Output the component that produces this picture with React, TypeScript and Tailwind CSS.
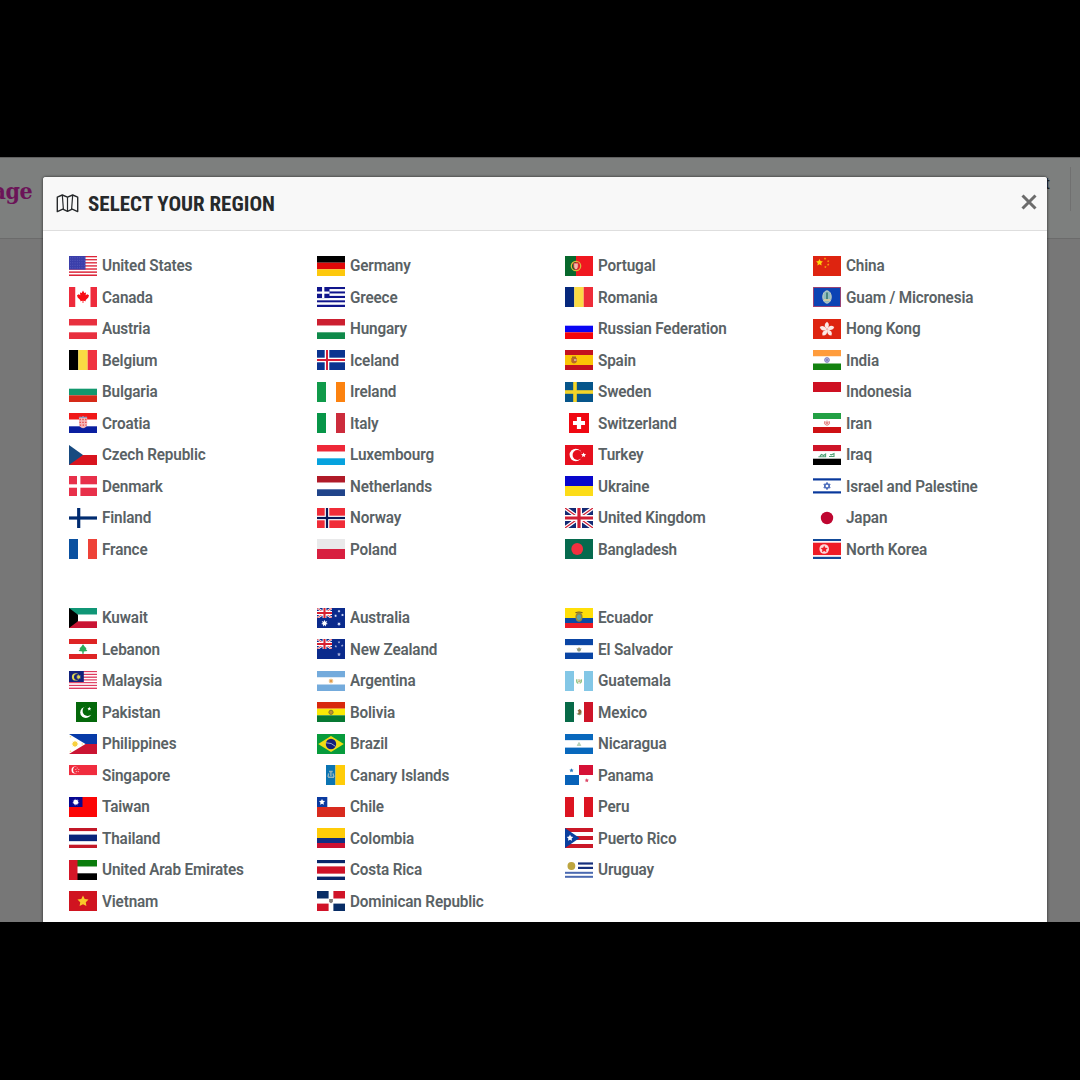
import React from "react";

type Bar = [string, number];

/* Horizontal stripes: each bar is [colour, height], top to bottom, 20 in all. */
function H({ bars }: { bars: Bar[] }) {
  let y = 0;
  return (
    <>
      {bars.map(([c, h], i) => {
        const r = <rect key={i} x="0" y={y} width="28" height={h} fill={c} />;
        y += h;
        return r;
      })}
    </>
  );
}

/* Vertical stripes: each bar is [colour, width], left to right, 28 in all. */
function V({ bars }: { bars: Bar[] }) {
  let x = 0;
  return (
    <>
      {bars.map(([c, w], i) => {
        const r = <rect key={i} x={x} y="0" width={w} height="20" fill={c} />;
        x += w;
        return r;
      })}
    </>
  );
}

function R({ x, y, w, h, c }: { x: number; y: number; w: number; h: number; c: string }) {
  return <rect x={x} y={y} width={w} height={h} fill={c} />;
}

function Star({ x, y, r, c, n = 5 }: { x: number; y: number; r: number; c: string; n?: number }) {
  const pts: string[] = [];
  for (let i = 0; i < n * 2; i++) {
    const q = i % 2 ? r * 0.5 : r;
    const a = (Math.PI * i) / n - Math.PI / 2;
    pts.push(`${x + q * Math.cos(a)},${y + q * Math.sin(a)}`);
  }
  return <polygon points={pts.join(" ")} fill={c} />;
}

function Nordic({ bg, outer, inner, ow, iw, cx = 10 }: { bg: string; outer: string; inner?: string; ow: number; iw?: number; cx?: number }) {
  return (
    <>
      <R x={0} y={0} w={28} h={20} c={bg} />
      <R x={cx - ow / 2} y={0} w={ow} h={20} c={outer} />
      <R x={0} y={10 - ow / 2} w={28} h={ow} c={outer} />
      {inner && iw ? (
        <>
          <R x={cx - iw / 2} y={0} w={iw} h={20} c={inner} />
          <R x={0} y={10 - iw / 2} w={28} h={iw} c={inner} />
        </>
      ) : null}
    </>
  );
}

function Canton() {
  return (
    <>
      <R x={0} y={0} w={28} h={20} c="#0a2a8c" />
      <path d="M0 0L15 10M15 0L0 10" stroke="#fff" strokeWidth="2.2" />
      <path d="M0 0L15 10M15 0L0 10" stroke="#d8202f" strokeWidth="0.8" />
      <path d="M7.5 0V10M0 5H15" stroke="#fff" strokeWidth="3.8" />
      <path d="M7.5 0V10M0 5H15" stroke="#d8202f" strokeWidth="2.1" />
      <R x={15} y={0} w={13} h={20} c="#0a2a8c" />
      <R x={0} y={10} w={28} h={10} c="#0a2a8c" />
    </>
  );
}

const W = "#ffffff";

const FLAGS: Record<string, React.ReactNode> = {
  "United States": (
    <>
      <H bars={Array.from({ length: 13 }, (_, i): Bar => [i % 2 ? W : "#dc2438", 20 / 13])} />
      <R x={0} y={0} w={16.5} h={13.6} c="#3a3eaa" />
      {[1.8, 4.3, 6.8, 9.3, 11.8].map((y) => (
        <path key={y} d={`M1 ${y}H16`} stroke="#6467c2" strokeWidth="0.8" strokeDasharray="0.9 1.4" />
      ))}
    </>
  ),
  Canada: (
    <>
      <V bars={[["#ee2b3c", 6.5], [W, 15], ["#ee2b3c", 6.5]]} />
      <path d="M14 3.6L15.3 6L17 5.5L16.7 8.2L18.2 7.2L20 8.3L19.3 10.6L16.5 13.2L17 14.2L14.4 13.8V16H13.6V13.8L11 14.2L11.5 13.2L8.7 10.6L8 8.3L9.8 7.2L11.3 8.2L11 5.5L12.7 6Z" fill="#f80d14" />
    </>
  ),
  Austria: <H bars={[["#e8303f", 6.7], [W, 6.6], ["#e8303f", 6.7]]} />,
  Belgium: <V bars={[["#000", 9.3], ["#fadc43", 9.4], ["#f03340", 9.3]]} />,
  Bulgaria: <H bars={[[W, 6.7], ["#12986e", 6.6], ["#d52a18", 6.7]]} />,
  Croatia: (
    <>
      <H bars={[["#f01818", 6.7], [W, 6.6], ["#0a1fa0", 6.7]]} />
      <path d="M10 5H18.2V11Q18 14.5 14.1 15.2Q10.2 14.5 10 11Z" fill="#f6b8b8" />
      <path d="M10.5 6.5H18M10.5 9.3H18M10.8 12.1H17.6" stroke="#e84848" strokeWidth="1.3" strokeDasharray="1.4 1.4" />
      <path d="M9.6 5L10.8 3.4L12.5 4L14 3L15.6 4L17.3 3.4L18.5 5Z" fill="#8e9fc4" />
    </>
  ),
  "Czech Republic": (
    <>
      <H bars={[[W, 10], ["#d8141e", 10]]} />
      <path d="M0 0L14 10L0 20Z" fill="#174a80" />
    </>
  ),
  Denmark: <Nordic bg="#e8304a" outer={W} ow={3.4} cx={9.7} />,
  Finland: <Nordic bg={W} outer="#002b70" ow={3.2} cx={9.7} />,
  France: <V bars={[["#0a50a0", 9], [W, 10], ["#ee4238", 9]]} />,

  Germany: <H bars={[["#000", 6.7], ["#e00808", 6.6], ["#fdc80c", 6.7]]} />,
  Greece: (
    <>
      <H bars={Array.from({ length: 9 }, (_, i): Bar => [i % 2 ? W : "#10158c", 20 / 9])} />
      <R x={0} y={0} w={12.5} h={11.1} c="#10158c" />
      <path d="M6.2 0V11.1M0 5.6H12.5" stroke="#fff" strokeWidth="2.3" />
    </>
  ),
  Hungary: <H bars={[["#cc1f30", 6.7], [W, 6.6], ["#0f8a4a", 6.7]]} />,
  Iceland: <Nordic bg="#0a3490" outer={W} inner="#d81e38" ow={4.6} iw={2} />,
  Ireland: <V bars={[["#109a4a", 9], [W, 10], ["#fc820f", 9]]} />,
  Italy: <V bars={[["#079548", 9], [W, 10], ["#cc2c3c", 9]]} />,
  Luxembourg: <H bars={[["#ee2838", 6.7], [W, 6.6], ["#06a2de", 6.7]]} />,
  Netherlands: <H bars={[["#b01a28", 6.7], [W, 6.6], ["#20448a", 6.7]]} />,
  Norway: <Nordic bg="#f02c38" outer={W} inner="#0a1858" ow={4.6} iw={2.2} />,
  Poland: <H bars={[["#e9e9ea", 10], ["#d81f40", 10]]} />,

  Portugal: (
    <>
      <V bars={[["#07682c", 11], ["#f01820", 17]]} />
      <circle cx="11" cy="10" r="4.7" fill="none" stroke="#d8b73c" strokeWidth="1.3" />
      <path d="M8.7 7H13.3V11Q12.8 13.4 11 13.8Q9.2 13.4 8.7 11Z" fill="#f0b9a8" stroke="#d4202a" strokeWidth="0.8" />
    </>
  ),
  Romania: <V bars={[["#06287c", 9.3], ["#fbdb45", 9.4], ["#ee2c38", 9.3]]} />,
  "Russian Federation": <H bars={[[W, 6.7], ["#0a06f4", 6.6], ["#f4060c", 6.7]]} />,
  Spain: (
    <>
      <H bars={[["#c4121e", 5], ["#fbc505", 10], ["#c4121e", 5]]} />
      <path d="M6.3 8H11.8V11.8Q11 13.5 9 13.6Q7 13.5 6.3 11.8Z" fill="#b8672a" />
      <path d="M7 7.2H11" stroke="#8f5c28" strokeWidth="1.3" />
      <R x={9} y={9} w={2.4} h={2} c="#d8a58c" />
    </>
  ),
  Sweden: <Nordic bg="#06558a" outer="#f4d428" ow={3.6} cx={10} />,
  Switzerland: (
    <>
      <R x={4} y={0} w={20} h={20} c="#f00812" />
      <path d="M14 4V16M8 10H20" stroke="#fff" strokeWidth="4.2" />
    </>
  ),
  Turkey: (
    <>
      <R x={0} y={0} w={28} h={20} c="#e6101e" />
      <circle cx="10.8" cy="10" r="6.2" fill="#fff" />
      <circle cx="12.5" cy="10" r="4.9" fill="#e6101e" />
      <Star x={18.6} y={10} r={2.6} c="#fff" />
    </>
  ),
  Ukraine: <H bars={[["#0806cc", 10], ["#fcdc18", 10]]} />,
  "United Kingdom": (
    <>
      <R x={0} y={0} w={28} h={20} c="#142a74" />
      <path d="M0 0L28 20M28 0L0 20" stroke="#fff" strokeWidth="3.8" />
      <path d="M0 0L28 20M28 0L0 20" stroke="#d01e34" strokeWidth="1.2" />
      <path d="M14 0V20M0 10H28" stroke="#fff" strokeWidth="6" />
      <path d="M14 0V20M0 10H28" stroke="#d01e34" strokeWidth="3.2" />
    </>
  ),
  Bangladesh: (
    <>
      <R x={0} y={0} w={28} h={20} c="#066a4e" />
      <circle cx="12.2" cy="10" r="5.9" fill="#f2303f" />
    </>
  ),

  China: (
    <>
      <R x={0} y={0} w={28} h={20} c="#de2410" />
      <Star x={6.5} y={6.5} r={3.6} c="#fcd80c" />
      <Star x={12} y={2.6} r={1.3} c="#f8a010" />
      <Star x={15.2} y={5.2} r={1.3} c="#f8a010" />
      <Star x={15.2} y={8.6} r={1.3} c="#f8a010" />
      <Star x={12.4} y={11} r={1.3} c="#f8a010" />
    </>
  ),
  "Guam / Micronesia": (
    <>
      <R x={0} y={0} w={28} h={20} c="#b84468" />
      <R x={0.8} y={0.8} w={26.4} h={18.4} c="#0b43b4" />
      <ellipse cx="14" cy="10" rx="4.2" ry="6.2" fill="#8fbcc0" stroke="#c7cfc4" strokeWidth="1" />
      <path d="M14 5.5V12.5" stroke="#2c6f62" strokeWidth="1.4" />
      <path d="M11 13H17" stroke="#dfd0a0" strokeWidth="1.6" />
    </>
  ),
  "Hong Kong": (
    <>
      <R x={0} y={0} w={28} h={20} c="#de2410" />
      {[0, 72, 144, 216, 288].map((a) => (
        <path key={a} d="M14 10.4Q9.4 6 14 2.8Q17.8 5.6 14 10.4Z" fill="#fbe9e5" transform={`rotate(${a} 14 10.4)`} />
      ))}
    </>
  ),
  India: (
    <>
      <H bars={[["#ff9c3c", 6.5], [W, 7], ["#138210", 6.5]]} />
      <circle cx="14" cy="10" r="2.4" fill="#b3b3df" stroke="#6f70b8" strokeWidth="0.8" />
      <circle cx="14" cy="10" r="0.8" fill="#5555a6" />
    </>
  ),
  Indonesia: <H bars={[["#ce1022", 10], [W, 10]]} />,
  Iran: (
    <>
      <H bars={[["#22a044", 6], [W, 8], ["#ce1014", 6]]} />
      <path d="M12 8Q10.4 10.8 13 12.3M16 8Q17.6 10.8 15 12.3M14 7.6V12.8M13.1 9V11M14.9 9V11" stroke="#dc6666" strokeWidth="0.9" fill="none" />
    </>
  ),
  Iraq: (
    <>
      <H bars={[["#ce1428", 6.3], [W, 7.4], ["#000", 6.3]]} />
      <path d="M5.4 11.8H12.6V9L10.6 10.5L8.5 9.5L7 11M16 11.5H21V8.6L18.5 9.8L17 9.5" stroke="#4f9f74" strokeWidth="1.1" fill="none" />
    </>
  ),
  "Israel and Palestine": (
    <>
      <H bars={[[W, 2.3], ["#08389c", 2.4], [W, 10.6], ["#08389c", 2.4], [W, 2.3]]} />
      <path d="M14 6.4L17.1 11.8H10.9ZM14 13.6L10.9 8.2H17.1Z" stroke="#3459b2" strokeWidth="0.95" fill="none" />
    </>
  ),
  Japan: (
    <>
      <R x={0} y={0} w={28} h={20} c={W} />
      <circle cx="14" cy="10" r="6.2" fill="#be0630" />
    </>
  ),
  "North Korea": (
    <>
      <H bars={[["#124a98", 2.2], [W, 1.5], ["#ee1c26", 12.6], [W, 1.5], ["#124a98", 2.2]]} />
      <circle cx="11.2" cy="10" r="4.8" fill="#fbdadb" />
      <Star x={11.2} y={10.2} r={3.8} c="#ee1c26" />
    </>
  ),

  Kuwait: (
    <>
      <H bars={[["#109676", 6.7], [W, 6.6], ["#ca1434", 6.7]]} />
      <path d="M0 0L9 6.7V13.3L0 20Z" fill="#000" />
    </>
  ),
  Lebanon: (
    <>
      <H bars={[["#de2424", 5], [W, 10], ["#de2424", 5]]} />
      <path d="M14 5.3L16 8L17.5 9.3L16.8 10L18.4 12L14.7 12.5V14.7H13.3V12.5L9.6 12L11.2 10L10.5 9.3L12 8Z" fill="#2bac5a" />
    </>
  ),
  Malaysia: (
    <>
      <g transform="scale(1 0.9)">
        <H bars={Array.from({ length: 13 }, (_, i): Bar => [i % 2 ? W : "#de3a5e", 20 / 13])} />
      </g>
      <R x={0} y={0} w={14.8} h={11} c="#12227c" />
      <circle cx="6.6" cy="5.9" r="3.7" fill="#ddd452" />
      <circle cx="8" cy="5.9" r="3" fill="#12227c" />
      <Star x={9.6} y={5.9} r={2.7} c="#ddd452" n={8} />
    </>
  ),
  Pakistan: (
    <>
      <R x={0} y={0} w={7} h={20} c={W} />
      <R x={7} y={0} w={21} h={20} c="#04680a" />
      <circle cx="16.8" cy="10.4" r="5.6" fill="#fff" />
      <circle cx="18.6" cy="8.9" r="5" fill="#04680a" />
      <Star x={20.3} y={6.8} r={2} c="#fff" />
    </>
  ),
  Philippines: (
    <>
      <H bars={[["#073ba8", 10], ["#ca1432", 10]]} />
      <path d="M0 0L16.5 10L0 20Z" fill="#fff" />
      <Star x={6} y={10} r={3.6} c="#f8d040" n={8} />
      <circle cx="6" cy="10" r="2.4" fill="#f8d040" />
      <circle cx="1.5" cy="2.8" r="0.8" fill="#f8dc78" />
      <circle cx="1.5" cy="17.2" r="0.8" fill="#f8dc78" />
      <circle cx="13.2" cy="10" r="0.7" fill="#f8dc78" />
    </>
  ),
  Singapore: (
    <>
      <H bars={[["#f02c3e", 10.3], [W, 9.7]]} />
      <circle cx="6.1" cy="5" r="3.6" fill="#fff" />
      <circle cx="7.5" cy="5" r="3.4" fill="#f02c3e" />
      {[[8.2, 3], [6.8, 4.5], [9.8, 4.5], [7.3, 6.6], [9.2, 6.6]].map(([x, y]) => (
        <circle key={`${x}-${y}`} cx={x} cy={y} r="0.6" fill="#fac5c9" />
      ))}
    </>
  ),
  Taiwan: (
    <>
      <R x={0} y={0} w={28} h={20} c="#fc0606" />
      <R x={0} y={0} w={13.5} h={10} c="#080890" />
      <Star x={6.8} y={5.2} r={4} c="#7e7ed4" n={12} />
      <circle cx="6.8" cy="5.2" r="2.4" fill="#fff" />
    </>
  ),
  Thailand: <H bars={[["#c21828", 3.3], [W, 3.3], ["#08247a", 6.8], [W, 3.3], ["#c21828", 3.3]]} />,
  "United Arab Emirates": (
    <>
      <H bars={[["#0a7c0c", 6.7], [W, 6.6], ["#000", 6.7]]} />
      <R x={0} y={0} w={8.5} h={20} c="#d41628" />
    </>
  ),
  Vietnam: (
    <>
      <R x={0} y={0} w={28} h={20} c="#d01420" />
      <Star x={14} y={10.4} r={5.8} c="#f9c92a" />
    </>
  ),

  Australia: (
    <>
      <Canton />
      <Star x={7.5} y={15.3} r={3.5} c="#fff" n={7} />
      <Star x={22} y={3.2} r={1.5} c="#dbe3ff" n={7} />
      <Star x={18.6} y={7.8} r={1.5} c="#dbe3ff" n={7} />
      <Star x={25.5} y={7} r={1.5} c="#dbe3ff" n={7} />
      <Star x={22} y={16} r={2} c="#dbe3ff" n={7} />
    </>
  ),
  "New Zealand": (
    <>
      <Canton />
      <Star x={22} y={3.2} r={1.4} c="#a4abd8" />
      <Star x={18.8} y={7.4} r={1.4} c="#a4abd8" />
      <Star x={25.2} y={6.6} r={1.4} c="#a4abd8" />
      <Star x={22} y={15.4} r={2} c="#a4abd8" />
    </>
  ),
  Argentina: (
    <>
      <H bars={[["#74abdc", 6.5], [W, 7], ["#74abdc", 6.5]]} />
      <Star x={14} y={10} r={3} c="#efbd78" n={8} />
      <circle cx="14" cy="10" r="1.3" fill="#e09a4a" />
    </>
  ),
  Bolivia: (
    <>
      <H bars={[["#d8280e", 6.7], ["#fbe906", 6.6], ["#077832", 6.7]]} />
      <circle cx="14" cy="10.3" r="2.1" fill="#c39136" stroke="#857631" strokeWidth="1" />
    </>
  ),
  Brazil: (
    <>
      <R x={0} y={0} w={28} h={20} c="#079b3c" />
      <path d="M14 2L26.8 10L14 18L1.2 10Z" fill="#f0dc14" />
      <circle cx="14" cy="10" r="5.2" fill="#14207a" />
      <path d="M9 8.8Q14.5 8.4 18.5 12.4" stroke="#b9c7de" strokeWidth="0.8" fill="none" />
    </>
  ),
  "Canary Islands": (
    <>
      <V bars={[[W, 9], ["#0b74b2", 9.5], ["#ffcc08", 9.5]]} />
      <path d="M12 6.5H15.7M11 12.2H17M11.7 8.4L11 12M13.9 7V11M16 8.4L17 12" stroke="#93b3bd" strokeWidth="1.4" />
    </>
  ),
  Chile: (
    <>
      <H bars={[[W, 10], ["#d82a1e", 10]]} />
      <R x={0} y={0} w={10.3} h={10} c="#0a3aa0" />
      <Star x={5} y={5.1} r={3.2} c="#fff" />
    </>
  ),
  Colombia: <H bars={[["#ffcc08", 10], ["#102d82", 5], ["#cc1030", 5]]} />,
  "Costa Rica": <H bars={[["#09266a", 3.4], [W, 3], ["#ce1228", 7.4], [W, 2.8], ["#09266a", 3.4]]} />,
  "Dominican Republic": (
    <>
      <R x={0} y={0} w={11.6} h={7.5} c="#082d66" />
      <R x={16.4} y={0} w={11.6} h={7.5} c="#d01328" />
      <R x={0} y={12.6} w={11.6} h={7.4} c="#d01328" />
      <R x={16.4} y={12.6} w={11.6} h={7.4} c="#082d66" />
      <path d="M12.1 8.1H15.9V10.5Q15.6 11.8 14 12.2Q12.4 11.8 12.1 10.5Z" fill="#807a78" />
    </>
  ),

  Ecuador: (
    <>
      <H bars={[["#ffdf08", 10], ["#0a4aa4", 5], ["#ee1c26", 5]]} />
      <ellipse cx="14" cy="9" rx="3.6" ry="4.8" fill="#96883c" />
      <ellipse cx="14" cy="9.2" rx="2" ry="2.8" fill="#62a3a5" />
      <path d="M10.4 4.8Q14 3.2 17.6 4.8" stroke="#756125" strokeWidth="1.1" fill="none" />
    </>
  ),
  "El Salvador": (
    <>
      <H bars={[["#0a45a4", 6.4], [W, 7.2], ["#0a45a4", 6.4]]} />
      <path d="M11.5 9Q14 10 16.5 9L15.5 12Q14 13.2 12.5 12Z" fill="#8b9880" />
      <path d="M13.2 9.2H14.9" stroke="#98783c" strokeWidth="1" />
    </>
  ),
  Guatemala: (
    <>
      <V bars={[["#83c7e6", 9], [W, 10], ["#83c7e6", 9]]} />
      <path d="M11.8 8.3Q11.4 12.2 13.4 12.2M14.6 12.2Q16.8 12 16.2 8.3" fill="none" stroke="#80bd77" strokeWidth="1.3" />
      <path d="M13 9H15V10.7H13" stroke="#b7a46e" strokeWidth="0.9" fill="none" />
    </>
  ),
  Mexico: (
    <>
      <V bars={[["#076a48", 9], [W, 10], ["#ce1428", 9]]} />
      <path d="M14.5 7Q17.2 8 16.4 11L14.8 12.8L12.7 11.5L13.8 10L12.5 8.7Z" fill="#8c653c" />
      <path d="M11.8 11.6Q14 14 16.6 11.8" stroke="#789167" strokeWidth="0.9" fill="none" />
    </>
  ),
  Nicaragua: (
    <>
      <H bars={[["#0868bd", 6.4], [W, 7.2], ["#0868bd", 6.4]]} />
      <path d="M14 8.4L15.8 11.5H12.2Z" fill="#b3d8c1" stroke="#a9c2a5" strokeWidth="0.7" />
    </>
  ),
  Panama: (
    <>
      <R x={14} y={0} w={14} h={10} c="#d61136" />
      <R x={0} y={10} w={14} h={10} c="#0862b8" />
      <Star x={6.5} y={5.4} r={2.2} c="#2678be" />
      <Star x={21.8} y={15.4} r={2.2} c="#dc4666" />
    </>
  ),
  Peru: <V bars={[["#dc1421", 9], [W, 10], ["#dc1421", 9]]} />,
  "Puerto Rico": (
    <>
      <H bars={[["#ca1828", 4], [W, 4], ["#ca1828", 4], [W, 4], ["#ca1828", 4]]} />
      <path d="M0 0L14.5 10L0 20Z" fill="#0a3f9e" />
      <Star x={5} y={10} r={3.4} c="#fff" />
    </>
  ),
  Uruguay: (
    <>
      <R x={13} y={2.4} w={15} h={2.2} c="#162f7c" />
      <R x={13} y={6.8} w={15} h={2.2} c="#162f7c" />
      <R x={0} y={11.8} w={28} h={2} c="#4a69b0" />
      <R x={0} y={15.8} w={28} h={2} c="#4a69b0" />
      <circle cx="6.4" cy="6" r="3.9" fill="#bda540" />
    </>
  ),
};

const TOP: string[][] = [
  ["United States", "Canada", "Austria", "Belgium", "Bulgaria", "Croatia", "Czech Republic", "Denmark", "Finland", "France"],
  ["Germany", "Greece", "Hungary", "Iceland", "Ireland", "Italy", "Luxembourg", "Netherlands", "Norway", "Poland"],
  ["Portugal", "Romania", "Russian Federation", "Spain", "Sweden", "Switzerland", "Turkey", "Ukraine", "United Kingdom", "Bangladesh"],
  ["China", "Guam / Micronesia", "Hong Kong", "India", "Indonesia", "Iran", "Iraq", "Israel and Palestine", "Japan", "North Korea"],
];

const BOTTOM: string[][] = [
  ["Kuwait", "Lebanon", "Malaysia", "Pakistan", "Philippines", "Singapore", "Taiwan", "Thailand", "United Arab Emirates", "Vietnam"],
  ["Australia", "New Zealand", "Argentina", "Bolivia", "Brazil", "Canary Islands", "Chile", "Colombia", "Costa Rica", "Dominican Republic"],
  ["Ecuador", "El Salvador", "Guatemala", "Mexico", "Nicaragua", "Panama", "Peru", "Puerto Rico", "Uruguay"],
];

function Group({ columns }: { columns: string[][] }) {
  return (
    <div className="grid grid-cols-[repeat(4,248px)]">
      {columns.map((names) => (
        <ul key={names[0]}>
          {names.map((name) => (
            <li key={name} className="flex h-[31.5px] items-center gap-[5px]">
              <svg viewBox="0 0 28 20" className="h-5 w-7 shrink-0 overflow-hidden" aria-hidden="true">
                {FLAGS[name]}
              </svg>
              <span className="origin-left scale-x-[0.955] pt-px text-[16px] leading-5 font-semibold tracking-[-0.16px] whitespace-nowrap text-[#5a6265]">{name}</span>
            </li>
          ))}
        </ul>
      ))}
    </div>
  );
}

export default function App() {
  return (
    <div className="h-[1080px] w-[1080px] overflow-hidden bg-black pt-[157px] font-[Roboto,sans-serif]">
      <div className="relative h-[765px] overflow-hidden bg-[#777777]">
        <header className="flex h-[82px] justify-between border-t border-b border-t-[#606060] border-b-[#6b6b6b] bg-[#7d7f7e]">
          <div className="flex w-8 justify-end pt-[17px]">
            <span className="origin-right scale-x-[0.9] font-['DejaVu_Serif',serif] text-[23px] leading-8 font-bold tracking-[-0.4px] text-[#6b1458]">age</span>
          </div>
          <div className="mt-[9px] mr-[9px] flex h-11 border-r border-[#707070] pr-5">
            <span className="pt-[7px] text-base leading-5 text-[#222]">t</span>
          </div>
        </header>
        <section className="absolute top-5 left-[43px] h-[760px] w-[1004px] rounded-t-[3px] bg-white shadow-[0_0_3px_rgba(0,0,0,0.7)]">
          <div className="flex h-[54px] items-center justify-between rounded-t-[3px] border-b border-[#dedede] bg-[#f8f8f8] pr-[10px] pl-[13px]">
            <div className="flex items-center gap-[9px]">
              <svg viewBox="0 0 23 19" className="mb-px h-[19px] w-[23px]" fill="none" stroke="#26292b" strokeWidth="1.4" strokeLinejoin="round" aria-hidden="true">
                <path d="M1.3 3.2L6.3 1L11.5 3.2L16.7 1L21.7 3.2V17.6L16.2 15.2L11.5 17.4L6.8 15.2L1.3 17.6Z" />
                <path d="M6.3 1L7.4 15.2M11.5 3.2V17.2M16.7 1L15.6 15.2" strokeWidth="1.2" />
              </svg>
              <h1 className="text-[21px] leading-6 font-bold whitespace-nowrap text-[#26292b] [font-stretch:75%]">SELECT YOUR REGION</h1>
            </div>
            <svg viewBox="0 0 16 16" className="mb-[3px] size-4" fill="none" stroke="#6c6c6c" strokeWidth="3" aria-label="Close">
              <path d="M1.5 1.5L14.5 14.5M14.5 1.5L1.5 14.5" />
            </svg>
          </div>
          <div className="flex flex-col gap-[37px] pt-[19px] pl-[26px]">
            <Group columns={TOP} />
            <Group columns={BOTTOM} />
          </div>
        </section>
      </div>
    </div>
  );
}
